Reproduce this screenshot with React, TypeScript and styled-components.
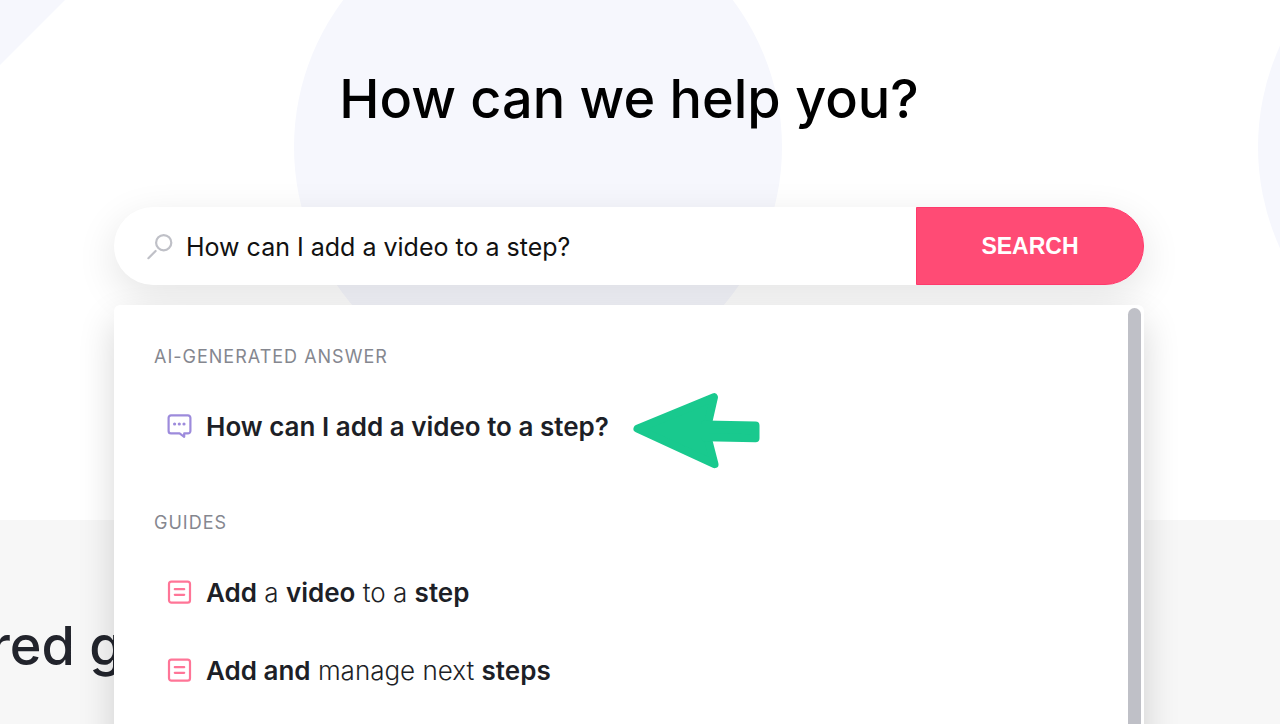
import React, { useState } from "react";
import styled, { createGlobalStyle } from "styled-components";

const GlobalStyle = createGlobalStyle`
  *, *::before, *::after { box-sizing: border-box; }
  html, body, #root { height: 100%; }
  body {
    margin: 0;
    overflow: hidden;
    background: #ffffff;
    font-family: Inter, "Liberation Sans", sans-serif;
    color: #1d1f27;
  }
`;

const Page = styled.div`
  position: relative;
  display: flex;
  flex-direction: column;
  min-height: 100%;
  overflow: hidden;
`;

const Backdrop = styled.svg`
  position: absolute;
  top: 0;
  left: 0;
  width: 100%;
  height: 520px;
  z-index: -1;
`;

const Hero = styled.header`
  display: flex;
  flex-direction: column;
  height: 520px;
  padding: 63px 136px 0 114px;
`;

const Title = styled.h1`
  margin: 0 0 72px;
  font-size: 54px;
  line-height: 72px;
  font-weight: 500;
  text-align: center;
  color: #000000;
`;

const SearchArea = styled.div`
  position: relative;
`;

const SearchForm = styled.form`
  display: flex;
  height: 78px;
  border-radius: 39px;
  background: #ffffff;
  box-shadow: 0 12px 40px rgba(0, 0, 0, 0.11);
`;

const Field = styled.label`
  display: flex;
  flex: 1;
  align-items: center;
  gap: 12px;
  min-width: 0;
  padding: 2px 24px 0 32px;
`;

const SearchInput = styled.input`
  flex: 1;
  min-width: 0;
  padding: 0;
  border: 0;
  outline: 0;
  background: transparent;
  font: 400 25px/32px Inter, "Liberation Sans", sans-serif;
  color: #111111;
`;

const SearchButton = styled.button`
  width: 228px;
  padding: 0;
  border: 1px solid #ff3a6c;
  border-radius: 0 39px 39px 0;
  background: #ff4b75;
  font: 700 23px/28px "Liberation Sans", Arial, sans-serif;
  color: #ffffff;
  cursor: pointer;
`;

const Results = styled.div`
  position: absolute;
  top: 98px;
  left: 0;
  right: 0;
  display: flex;
  justify-content: space-between;
  min-height: 620px;
  padding: 3px 3px 0 40px;
  border-radius: 6px;
  background: #ffffff;
  box-shadow: 0 16px 36px rgba(0, 0, 0, 0.16);
`;

const Scrollbar = styled.div`
  width: 13px;
  border-radius: 7px;
  background: #bfc0c7;
`;

const Groups = styled.div`
  display: flex;
  flex-direction: column;
  gap: 45px;
  padding-top: 37px;
`;

const GroupLabel = styled.h2`
  margin: 0 0 19px;
  font-size: 18px;
  line-height: 24px;
  font-weight: 400;
  letter-spacing: 1px;
  color: #85878f;
`;

const ResultList = styled.ul`
  margin: 0;
  padding: 0;
  list-style: none;
`;

const ResultRow = styled.li`
  display: flex;
  align-items: center;
  gap: 18px;
  height: 78px;
`;

const ResultLink = styled.a`
  display: flex;
  align-items: center;
  gap: 14px;
  padding-left: 13px;
  font-size: 26px;
  line-height: 32px;
  font-weight: 300;
  color: #1d1f27;
  text-decoration: none;
  white-space: nowrap;

  b { font-weight: 600; }
`;

const Featured = styled.section`
  flex: 1;
  min-height: 204px;
  padding-top: 90px;
  background: #f7f7f7;
`;

const FeaturedTitle = styled.h2`
  margin: 0 0 0 -10px;
  font-size: 54px;
  line-height: 72px;
  font-weight: 500;
  color: #22242c;
`;

const SearchIcon = () => (
  <svg width="28" height="28" viewBox="0 0 28 28" fill="none" stroke="#bfc0c7" strokeWidth="2.2" strokeLinecap="round" aria-hidden="true">
    <circle cx="17.7" cy="9.7" r="7.6" />
    <path d="M9.6 18 2.4 25.2" />
  </svg>
);

const ChatIcon = () => (
  <svg width="25" height="26" viewBox="0 0 25 26" fill="none" stroke="#9d8bdc" strokeWidth="2.2" strokeLinejoin="round" aria-hidden="true">
    <path d="M4 1.4H21A2.4 2.4 0 0 1 23.4 3.8V17A2.4 2.4 0 0 1 21 19.4H17.2V22.8L12.6 19.4H4A2.4 2.4 0 0 1 1.6 17V3.8A2.4 2.4 0 0 1 4 1.4Z" />
    <g fill="#9d8bdc" stroke="none">
      <circle cx="7.6" cy="10" r="1.6" />
      <circle cx="12.3" cy="10" r="1.6" />
      <circle cx="17" cy="10" r="1.6" />
    </g>
  </svg>
);

const GuideIcon = () => (
  <svg width="25" height="26" viewBox="0 0 25 26" fill="none" stroke="#ff7597" strokeWidth="2.2" strokeLinecap="round" aria-hidden="true">
    <rect x="2" y="1.6" width="21" height="21" rx="2.4" />
    <path d="M7.8 9.2H17.2M7.8 14.8H17.2" />
  </svg>
);

const Arrow = () => (
  <svg width="136" height="86" viewBox="-1 -3 136 86" fill="#19c98e" stroke="#19c98e" strokeWidth="8" strokeLinejoin="round" aria-hidden="true">
    <path d="M9.5 41.7 86 10.2 79.5 38.7 79.5 50 86.5 77.2Z" />
    <path d="M77 37.6 127.5 38.6V51.3L77 50.3Z" />
  </svg>
);

const guides = [
  { id: "video", title: <><b>Add</b> a <b>video</b> to a <b>step</b></> },
  { id: "next", title: <><b>Add and</b> manage next <b>steps</b></> },
];

export default function App() {
  const [query, setQuery] = useState("How can I add a video to a step?");
  return (
    <>
      <GlobalStyle />
      <Page>
        <Backdrop fill="#f6f7fd" aria-hidden="true">
          <path d="M0 0H65L0 65Z" />
          <circle cx="538" cy="147" r="244" />
          <circle cx="1502" cy="147" r="244" />
        </Backdrop>
        <Hero>
          <Title>How can we help you?</Title>
          <SearchArea>
            <SearchForm onSubmit={(e) => e.preventDefault()}>
              <Field>
                <SearchIcon />
                <SearchInput
                  aria-label="Search"
                  value={query}
                  onChange={(e) => setQuery(e.target.value)}
                />
              </Field>
              <SearchButton type="submit">SEARCH</SearchButton>
            </SearchForm>
            <Results>
              <Groups>
                <section>
                  <GroupLabel>AI-GENERATED ANSWER</GroupLabel>
                  <ResultList>
                    <ResultRow>
                      <ResultLink href="#answer">
                        <ChatIcon />
                        <b>How can I add a video to a step?</b>
                      </ResultLink>
                      <Arrow />
                    </ResultRow>
                  </ResultList>
                </section>
                <section>
                  <GroupLabel>GUIDES</GroupLabel>
                  <ResultList>
                    {guides.map((guide) => (
                      <ResultRow key={guide.id}>
                        <ResultLink href={`#${guide.id}`}>
                          <GuideIcon />
                          <span>{guide.title}</span>
                        </ResultLink>
                      </ResultRow>
                    ))}
                  </ResultList>
                </section>
              </Groups>
              <Scrollbar />
            </Results>
          </SearchArea>
        </Hero>
        <Featured>
          <FeaturedTitle>red g</FeaturedTitle>
        </Featured>
      </Page>
    </>
  );
}
